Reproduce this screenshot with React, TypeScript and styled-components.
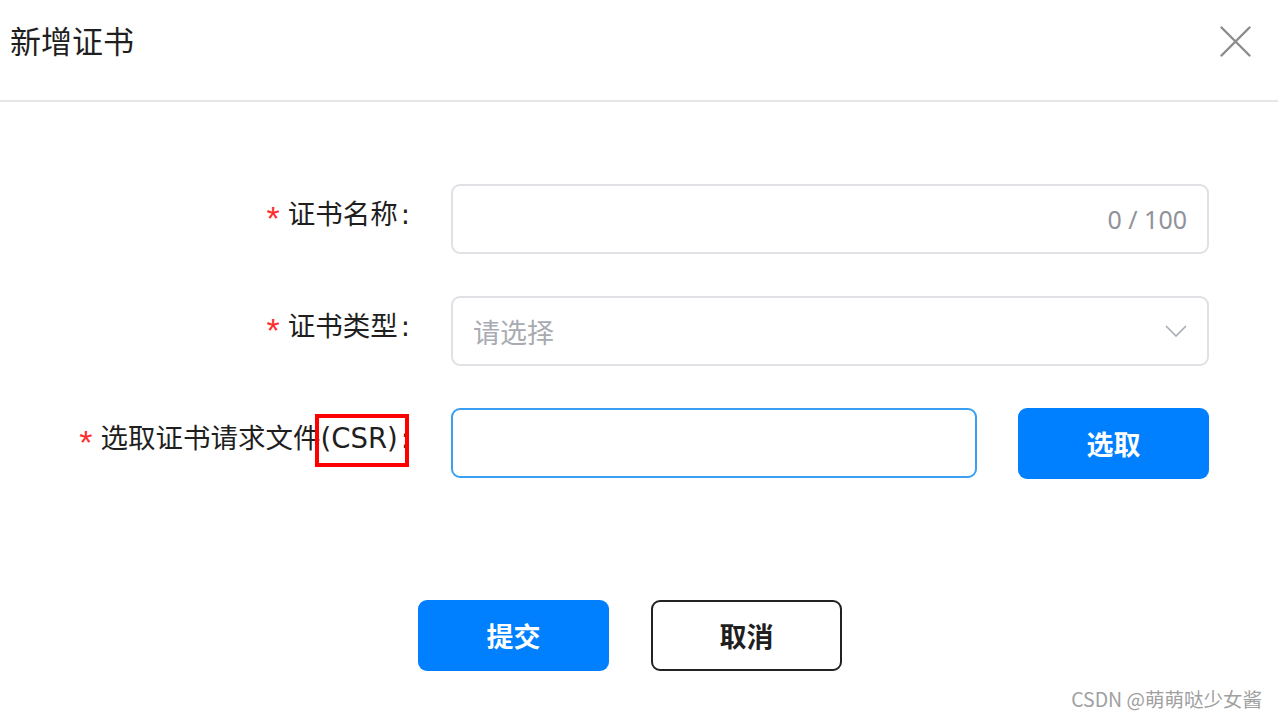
import React from "react";
import styled, { createGlobalStyle } from "styled-components";

const Global = createGlobalStyle`
  html, body { margin: 0; padding: 0; background: #fff; }
  body { font-family: "Noto Sans CJK SC", "Noto Sans", sans-serif; color: #1f1f1f; }
  * { box-sizing: border-box; }
`;

const Page = styled.div`
  width: 1278px;
  height: 720px;
  position: relative;
  overflow: hidden;
  background: #fff;
`;

const Header = styled.header`
  height: 102px;
  display: flex;
  align-items: flex-start;
  justify-content: space-between;
  padding: 20px 27px 0 10px;
  border-bottom: 2px solid #e6e6e6;
`;

const Title = styled.h1`
  margin: 0;
  font-size: 31px;
  line-height: 40px;
  font-weight: 400;
  color: #1f1f1f;
`;

const Close = styled.button`
  width: 31px;
  height: 31px;
  margin-top: 6px;
  padding: 0;
  border: 0;
  background: none;
  display: flex;
  align-items: center;
  justify-content: center;
`;

const Form = styled.div`
  display: grid;
  grid-template-columns: 410px 758px;
  column-gap: 41px;
  row-gap: 42px;
  padding-top: 82px;
`;

const Label = styled.label`
  height: 70px;
  line-height: 60px;
  font-family: "DejaVu Sans", "Noto Sans CJK SC", sans-serif;
  font-size: 27.5px;
  text-align: right;
  color: #1f1f1f;
  white-space: nowrap;
`;

const Colon = styled.span`
  margin-left: 3px;
  font-weight: 400;
`;

const Star = styled.span`
  color: #ff2d2d;
  margin-right: 8px;
  font-size: 34px;
  font-family: "Liberation Sans", sans-serif;
  vertical-align: -6px;
  line-height: 0;
`;

const Marked = styled.span`
  position: relative;
  &::after {
    content: "";
    position: absolute;
    left: -6px;
    right: -11px;
    top: -8px;
    bottom: -13px;
    border: 4px solid #ff0000;
    pointer-events: none;
  }
`;

const Field = styled.div<{ $focus?: boolean }>`
  height: 70px;
  border: ${(p) => (p.$focus ? "2px solid #3a9ff2" : "2px solid #dfe1e5")};
  border-radius: 9px;
  display: flex;
  align-items: center;
  justify-content: space-between;
  padding: 0 20px 0 20px;
  font-size: 27px;
  flex: 1;
`;

const Placeholder = styled.span`
  color: #a8abb2;
`;

const Counter = styled.span`
  margin-left: auto;
  color: #909399;
  font-family: "Noto Sans", sans-serif;
  font-size: 25px;
`;

const FieldRow = styled.div`
  display: flex;
  gap: 41px;
`;

const Button = styled.button<{ $primary?: boolean }>`
  width: 191px;
  height: 71px;
  border-radius: 9px;
  font-family: "Noto Sans CJK SC", sans-serif;
  font-size: 27px;
  font-weight: 700;
  cursor: pointer;
  background: ${(p) => (p.$primary ? "#0080ff" : "#fff")};
  color: ${(p) => (p.$primary ? "#fff" : "#1f1f1f")};
  border: ${(p) => (p.$primary ? "0" : "2px solid #222")};
`;

const Actions = styled.div`
  display: flex;
  gap: 42px;
  padding-left: 418px;
  margin-top: 121px;
`;

const Watermark = styled.div`
  position: absolute;
  right: 16px;
  bottom: 7px;
  font-size: 19.5px;
  color: #a0a0a0;
  font-family: "Noto Sans CJK SC", sans-serif;
`;

export default function App() {
  return (
    <Page>
      <Global />
      <Header>
        <Title>新增证书</Title>
        <Close aria-label="close">
          <svg width="31" height="31" viewBox="0 0 31 31">
            <path d="M1.5 1.5 L29.5 29.5 M29.5 1.5 L1.5 29.5" stroke="#8c8c8c" strokeWidth="2.4" strokeLinecap="round" />
          </svg>
        </Close>
      </Header>
      <Form>
        <Label><Star>*</Star>证书名称<Colon>:</Colon></Label>
        <Field>
          <Counter>0 / 100</Counter>
        </Field>
        <Label><Star>*</Star>证书类型<Colon>:</Colon></Label>
        <Field>
          <Placeholder>请选择</Placeholder>
          <svg width="22" height="12" viewBox="0 0 22 12">
            <path d="M1 1 L11 11 L21 1" fill="none" stroke="#a8abb2" strokeWidth="1.6" />
          </svg>
        </Field>
        <Label><Star>*</Star>选取证书请求文件<Marked>(CSR)</Marked><Colon>:</Colon></Label>
        <FieldRow>
          <Field $focus />
          <Button $primary>选取</Button>
        </FieldRow>
      </Form>
      <Actions>
        <Button $primary>提交</Button>
        <Button>取消</Button>
      </Actions>
      <Watermark>CSDN @萌萌哒少女酱</Watermark>
    </Page>
  );
}
